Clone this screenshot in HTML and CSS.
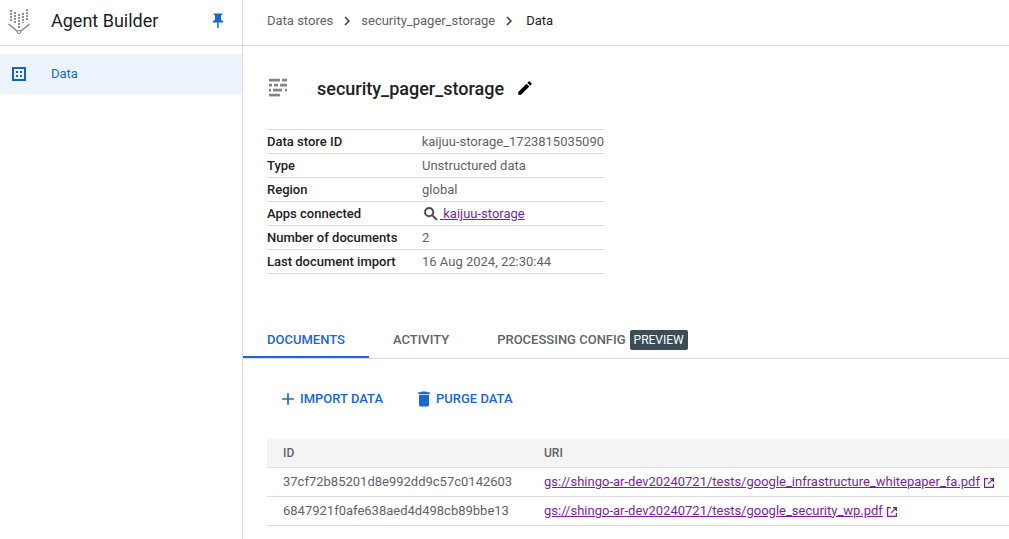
FILE: index.html
```html
<!DOCTYPE html>
<html>
<head>
<meta charset="utf-8">
<title>Agent Builder</title>
<link rel="stylesheet" href="styles.css">
</head>
<body>

<div class="app">
  <div class="sidebar">
    <div class="brand">
      <svg class="brand-logo" width="30" height="30" viewBox="5 5 30 30">
        <g fill="none" stroke="#80868b" stroke-width="1.8" stroke-dasharray="2 1">
          <path d="M11 9V20"/><path d="M15 11V23"/><path d="M19 13V28"/><path d="M23 12V22"/><path d="M27 8V20"/>
        </g>
        <path d="M8.5 23L19 31.5L29.5 23" fill="none" stroke="#80868b" stroke-width="1.5"/>
        <circle cx="19" cy="31" r="1.6" fill="#fff" stroke="#80868b"/>
      </svg>
      <span class="brand-name">Agent Builder</span>
      <svg class="pin" width="18" height="18" viewBox="0 0 24 24"><path fill="#1967d2" d="M16 9V4h1c.55 0 1-.45 1-1s-.45-1-1-1H7c-.55 0-1 .45-1 1s.45 1 1 1h1v5c0 1.66-1.34 3-3 3v2h5.97v7l1 1 1-1v-7H19v-2c-1.66 0-3-1.34-3-3z"/></svg>
    </div>
    <div class="nav-item">
      <svg width="18" height="18" viewBox="0 0 18 18"><path fill="#1a5fc8" fill-rule="evenodd" d="M2 2h14v14H2zM4 4v10h10V4z"/><path fill="#1a5fc8" d="M6 6h2v2H6zM10 6h2v2h-2zM6 10h2v2H6zM10 10h2v2h-2z"/></svg>
      <span>Data</span>
    </div>
  </div>

  <div class="main">
    <div class="crumbs">
      <span>Data stores</span>
      <svg class="chev" width="18" height="18" viewBox="0 0 24 24"><path fill="#3c4043" d="M10 6L8.59 7.41 13.17 12l-4.58 4.59L10 18l6-6z"/></svg>
      <span>security_pager_storage</span>
      <svg class="chev" width="18" height="18" viewBox="0 0 24 24"><path fill="#3c4043" d="M10 6L8.59 7.41 13.17 12l-4.58 4.59L10 18l6-6z"/></svg>
      <span class="crumb-last">Data</span>
    </div>

    <div class="title-row">
      <svg class="store-icon" width="24" height="24" viewBox="0 0 24 24">
        <g fill="#80868b">
          <path d="M2 2.8h11v2.6H2zM15 2.8h5v2.6h-5z"/>
          <path d="M2 7.8h3v2.6H2zM7 7.8h4v2.6H7zM13 7.8h7v2.6h-7z"/>
          <path d="M2 12.8h2v2.6H2zM6 12.8h9v2.6H6zM18 12.8h2v2.6h-2z"/>
          <path d="M2 17.8h11v2.6H2z"/>
        </g>
      </svg>
      <h1>security_pager_storage</h1>
      <svg width="18" height="18" viewBox="0 0 24 24"><path fill="#000" d="M3 17.25V21h3.75L17.81 9.94l-3.75-3.75L3 17.25zM20.71 7.04a1 1 0 0 0 0-1.41l-2.34-2.34a1 1 0 0 0-1.41 0l-1.83 1.83 3.75 3.75 1.83-1.83z"/></svg>
    </div>

    <div class="details">
      <div class="detail-row"><span class="detail-key">Data store ID</span><span>kaijuu-storage_1723815035090</span></div>
      <div class="detail-row"><span class="detail-key">Type</span><span>Unstructured data</span></div>
      <div class="detail-row"><span class="detail-key">Region</span><span>global</span></div>
      <div class="detail-row"><span class="detail-key">Apps connected</span>
        <span class="app-link">
          <svg width="18" height="18" viewBox="0 0 24 24"><path fill="#3c4043" stroke="#3c4043" stroke-width=".6" d="M15.5 14h-.79l-.28-.27A6.47 6.47 0 0 0 16 9.5 6.5 6.5 0 1 0 9.5 16c1.61 0 3.09-.59 4.23-1.57l.27.28v.79l5 4.99L20.49 19l-4.99-5zm-6 0C7.01 14 5 11.99 5 9.5S7.01 5 9.5 5 14 7.01 14 9.5 11.99 14 9.5 14z"/></svg>
          <a href="#">&nbsp;kaijuu-storage</a>
        </span>
      </div>
      <div class="detail-row"><span class="detail-key">Number of documents</span><span>2</span></div>
      <div class="detail-row"><span class="detail-key">Last document import</span><span>16 Aug 2024, 22:30:44</span></div>
    </div>

    <div class="tabs">
      <div class="tab tab-active">DOCUMENTS</div>
      <div class="tab">ACTIVITY</div>
      <div class="tab">PROCESSING CONFIG<span class="badge">PREVIEW</span></div>
    </div>

    <div class="actions">
      <div class="action">
        <svg width="20" height="20" viewBox="0 0 24 24"><path fill="#1967d2" d="M19 13h-6v6h-2v-6H5v-2h6V5h2v6h6v2z"/></svg>
        <span>IMPORT DATA</span>
      </div>
      <div class="action">
        <svg width="20" height="20" viewBox="0 0 24 24"><path fill="#1967d2" d="M6 19c0 1.1.9 2 2 2h8c1.1 0 2-.9 2-2V7H6v12zM19 4h-3.5l-1-1h-5l-1 1H5v2h14V4z"/></svg>
        <span>PURGE DATA</span>
      </div>
    </div>

    <div class="table">
      <div class="table-row table-head"><div class="col-id">ID</div><div>URI</div></div>
      <div class="table-row">
        <div class="col-id">37cf72b85201d8e992dd9c57c0142603</div>
        <div class="uri"><a href="#">gs://shingo-ar-dev20240721/tests/google_infrastructure_whitepaper_fa.pdf</a>
          <svg class="ext" width="12" height="12" viewBox="0 0 12 12"><path fill="none" stroke="#7b1fa2" stroke-width="1.2" d="M5 1.6H1.6v8.8h8.8V7M7 1.6h3.4V5M10.2 1.8L5.2 6.8"/></svg>
        </div>
      </div>
      <div class="table-row">
        <div class="col-id">6847921f0afe638aed4d498cb89bbe13</div>
        <div class="uri"><a href="#">gs://shingo-ar-dev20240721/tests/google_security_wp.pdf</a>
          <svg class="ext" width="12" height="12" viewBox="0 0 12 12"><path fill="none" stroke="#7b1fa2" stroke-width="1.2" d="M5 1.6H1.6v8.8h8.8V7M7 1.6h3.4V5M10.2 1.8L5.2 6.8"/></svg>
        </div>
      </div>
    </div>
  </div>
</div>

</body>
</html>
```

FILE: styles.css
```css
html, body {
  height: 100%;
  margin: 0;
}
body {
  background-color: #fff;
  font-family: Roboto, sans-serif;
  font-size: 13px;
  color: #202124;
  overflow: hidden;
}
a {
  color: #7b1fa2;
}
.app {
  display: flex;
  height: 100%;
}

.sidebar {
  width: 242px;
  flex-shrink: 0;
  border-right: 1px solid #dadce0;
}
.brand {
  display: flex;
  align-items: center;
  height: 41px;
  border-bottom: 1px solid #dadce0;
  padding: 0 15px 4px 5px;
}
.brand-name {
  flex: 1;
  margin-left: 16px;
  font-size: 18px;
}
.nav-item {
  display: flex;
  align-items: center;
  height: 40px;
  margin-top: 8px;
  padding-left: 10px;
  background: #ecf3fd;
  color: #1967d2;
}
.nav-item span {
  margin-left: 23px;
  padding-bottom: 2px;
}

.main {
  flex: 1;
  min-width: 0;
}
.crumbs {
  display: flex;
  align-items: center;
  gap: 5px;
  height: 41px;
  border-bottom: 1px solid #dadce0;
  padding: 0 0 4px 24px;
  color: #5f6368;
}
.crumb-last {
  margin-left: 3px;
  color: #202124;
}
.title-row {
  display: flex;
  align-items: center;
  height: 24px;
  margin-top: 30px;
  padding-left: 24px;
}
.title-row h1 {
  margin: 0 12px 0 26px;
  font-size: 18px;
  font-weight: 500;
}

.details {
  width: 337px;
  margin: 29px 0 0 24px;
  border-top: 1px solid #dadce0;
}
.detail-row {
  display: flex;
  align-items: center;
  height: 23px;
  border-bottom: 1px solid #dadce0;
  color: #5f6368;
  white-space: nowrap;
}
.detail-key {
  width: 155px;
  font-weight: 500;
  color: #202124;
}
.app-link {
  display: flex;
  align-items: center;
}

.tabs {
  display: flex;
  margin-top: 47px;
  height: 37px;
  border-bottom: 1px solid #dadce0;
}
.tab {
  display: flex;
  align-items: center;
  padding: 0 24px;
  font-size: 13px;
  font-weight: 500;
  color: #5f6368;
}
.tab-active {
  color: #1967d2;
  border-top: 2px solid transparent;
  border-bottom: 2px solid #1967d2;
}
.badge {
  margin-left: 4px;
  padding: 0 4px;
  height: 20px;
  line-height: 20px;
  border-radius: 2px;
  background: #3c4d57;
  color: #fff;
  font-size: 12px;
  font-weight: 400;
}

.actions {
  display: flex;
  gap: 31px;
  margin-top: 30px;
  padding-left: 35px;
}
.action {
  display: flex;
  align-items: center;
  gap: 2px;
  font-size: 13px;
  font-weight: 500;
  color: #1967d2;
}
.action span {
  padding-bottom: 2px;
}

.table {
  margin: 30px 0 0 24px;
}
.table-row {
  display: flex;
  align-items: center;
  height: 26px;
  padding-bottom: 2px;
  border-bottom: 1px solid #dadce0;
  color: #5f6368;
}
.table-head {
  height: 28px;
  padding-bottom: 0;
  background: #f4f4f4;
  font-size: 12px;
  font-weight: 500;
}
.col-id {
  width: 261px;
  padding-left: 16px;
  flex-shrink: 0;
}
.uri {
  display: flex;
  align-items: center;
  gap: 3px;
  white-space: nowrap;
}
.ext {
  margin-top: 4px;
}
```
